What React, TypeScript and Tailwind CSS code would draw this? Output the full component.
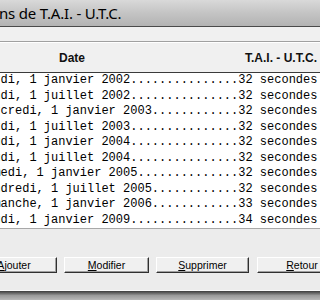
import React from "react";

const rows: { d: string; v: string }[] = [
  { d: "Mardi, 1 janvier 2002", v: "32" },
  { d: "Lundi, 1 juillet 2002", v: "32" },
  { d: "Mercredi, 1 janvier 2003", v: "32" },
  { d: "Mardi, 1 juillet 2003", v: "32" },
  { d: "Jeudi, 1 janvier 2004", v: "32" },
  { d: "Jeudi, 1 juillet 2004", v: "32" },
  { d: "Samedi, 1 janvier 2005", v: "32" },
  { d: "Vendredi, 1 juillet 2005", v: "32" },
  { d: "Dimanche, 1 janvier 2006", v: "33" },
  { d: "Jeudi, 1 janvier 2009", v: "34" },
];

function pad(s: string) {
  return s + ".".repeat(Math.max(0, 36 - s.length));
}

function Btn({ label, rest, w, ml }: { label: string; rest: string; w: string; ml: string }) {
  return (
    <div
      className={`${w} ${ml} shrink-0 h-[16px] flex items-center justify-center bg-[#f0f0f0] border-t border-l border-t-[#ffffff] border-l-[#ffffff] border-r border-b border-r-[#303030] border-b-[#303030] shadow-[inset_-1px_-1px_0_#a0a0a0] text-[10.5px] text-black leading-none`}
    >
      <span>
        <span className="underline">{label}</span>
        {rest}
      </span>
    </div>
  );
}

export default function App() {
  return (
    <div className="w-[320px] h-[300px] overflow-hidden bg-[#ececec] flex flex-col font-['Liberation_Sans',Arial,sans-serif]">
      {/* title bar */}
      <div className="h-[27px] shrink-0 bg-gradient-to-b from-[#d9d9d9] via-[#c4c4c4] to-[#b3b3b3] border-b border-[#4a4a4a] flex items-center overflow-hidden">
        <span className="ml-[-1px] whitespace-nowrap text-[15px] text-black font-['Noto_Sans',sans-serif] tracking-[-0.2px]">
          ns de T.A.I. - U.T.C.
        </span>
      </div>
      {/* light strip */}
      <div className="h-[15px] shrink-0 bg-[#f0f0f0] border-b border-[#a0a0a0]" />
      {/* header */}
      <div className="h-[31px] shrink-0 bg-[#f0f0f0] border-t border-white border-b border-b-[#3a3a3a] flex items-center text-[12px] font-bold text-[#111]">
        <div className="w-[144px] text-center">Date</div>
        <div className="flex-1 text-right pr-[3px]">T.A.I. - U.T.C.</div>
      </div>
      {/* list */}
      <div className="h-[156px] shrink-0 bg-white border-b border-[#a8a8a8] overflow-hidden">
        <div className="ml-[-21px] font-['Liberation_Mono',monospace] text-[12px] leading-[15.5px] text-black whitespace-pre">
          {rows.map((r, i) => (
            <div key={i}>{pad(r.d) + r.v + " secondes"}</div>
          ))}
        </div>
      </div>
      {/* buttons area */}
      <div className="flex-1 bg-[#ececec] flex flex-col">
        <div className="h-[28px]" />
        <div className="flex items-start overflow-hidden">
          <Btn label="A" rest="jouter" w="w-[86px]" ml="ml-[-29px]" />
          <Btn label="M" rest="odifier" w="w-[85px]" ml="ml-[7px]" />
          <Btn label="S" rest="upprimer" w="w-[93px]" ml="ml-[7px]" />
          <Btn label="R" rest="etour" w="w-[90px]" ml="ml-[8px]" />
        </div>
        <div className="flex-1" />
        <div className="h-[10px] border-t border-[#fafafa] bg-gradient-to-b from-[#3c3c3c] via-[#9a9a9a] to-[#b8b8b8]" />
      </div>
    </div>
  );
}
